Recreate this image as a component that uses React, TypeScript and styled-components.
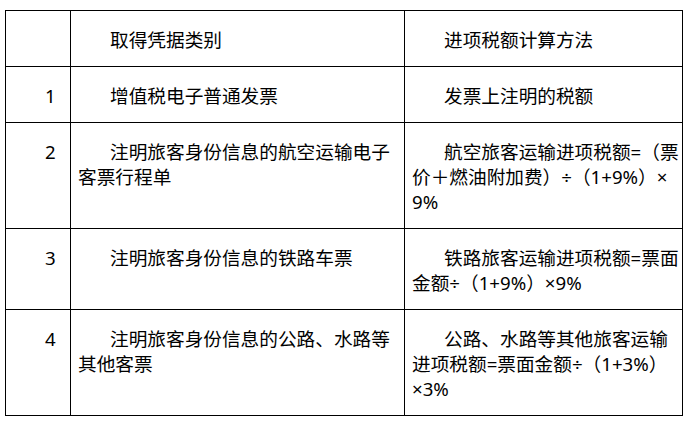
import styled, { createGlobalStyle } from "styled-components";

const GlobalStyle = createGlobalStyle`
  body {
    margin: 0;
    background: #ffffff;
    font-family: "Noto Sans", "Noto Sans CJK SC", sans-serif;
    color: #000000;
  }
`;

const Page = styled.div`
  padding: 10px 0 0 5px;
`;

const Table = styled.table`
  border-collapse: collapse;
  table-layout: fixed;
  width: 677px;
`;

const Cell = styled.td`
  border: 1px solid #000000;
  padding: 16px 7px 14px;
  vertical-align: top;
`;

const Text = styled.p`
  margin: 0;
  text-indent: 32px;
  font-size: 18.67px;
  line-height: 25px;
  white-space: nowrap;
`;

type Row = {
  num: string;
  kind: string[];
  method: string[];
};

const rows: Row[] = [
  { num: "1", kind: ["增值税电子普通发票"], method: ["发票上注明的税额"] },
  {
    num: "2",
    kind: ["注明旅客身份信息的航空运输电子", "客票行程单"],
    method: ["航空旅客运输进项税额=（票", "价＋燃油附加费）÷（1+9%）×", "9%"],
  },
  {
    num: "3",
    kind: ["注明旅客身份信息的铁路车票"],
    method: ["铁路旅客运输进项税额=票面", "金额÷（1+9%）×9%"],
  },
  {
    num: "4",
    kind: ["注明旅客身份信息的公路、水路等", "其他客票"],
    method: ["公路、水路等其他旅客运输", "进项税额=票面金额÷（1+3%）", "×3%"],
  },
];

const Lines = ({ lines }: { lines: string[] }) => (
  <Text>
    {lines.map((line, i) => (
      <span key={i}>
        {i > 0 && <br />}
        {line}
      </span>
    ))}
  </Text>
);

const App = () => {
  return (
    <Page>
      <GlobalStyle />
      <Table>
        <colgroup>
          <col style={{ width: 65 }} />
          <col style={{ width: 334 }} />
          <col style={{ width: 278 }} />
        </colgroup>
        <tbody>
          <tr>
            <Cell>
              <Text />
            </Cell>
            <Cell>
              <Text>取得凭据类别</Text>
            </Cell>
            <Cell>
              <Text>进项税额计算方法</Text>
            </Cell>
          </tr>
          {rows.map(row => (
            <tr key={row.num}>
              <Cell>
                <Text>{row.num}</Text>
              </Cell>
              <Cell>
                <Lines lines={row.kind} />
              </Cell>
              <Cell>
                <Lines lines={row.method} />
              </Cell>
            </tr>
          ))}
        </tbody>
      </Table>
    </Page>
  );
};

export default App;
